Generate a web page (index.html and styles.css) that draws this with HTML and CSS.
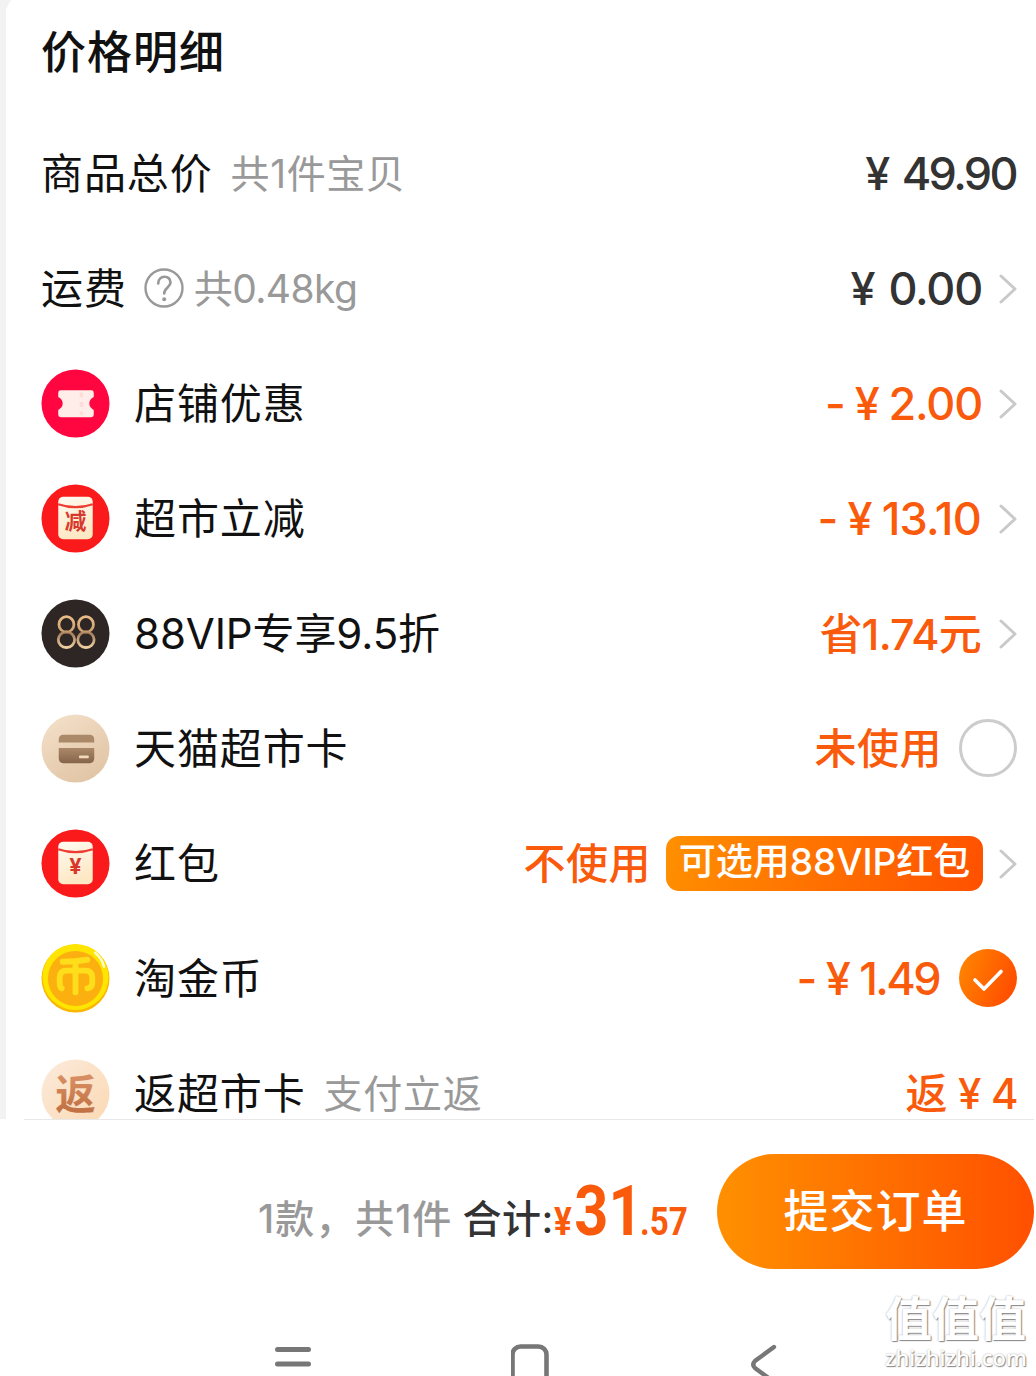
FILE: index.html
```html
<!DOCTYPE html>
<html lang="zh-CN">
<head>
<meta charset="utf-8">
<title>价格明细</title>
<link rel="stylesheet" href="styles.css">
</head>
<body>
<svg class="defs" width="0" height="0" aria-hidden="true">
  <defs>
    <linearGradient id="cream" x1="0" y1="0" x2="0.3" y2="1"><stop offset="0" stop-color="#fffaf2"/><stop offset="1" stop-color="#fde8c4"/></linearGradient>
    <linearGradient id="sand" x1="0.2" y1="0" x2="0.8" y2="1"><stop offset="0" stop-color="#f3dfc8"/><stop offset="1" stop-color="#e0c3a3"/></linearGradient>
    <linearGradient id="brown" x1="0" y1="0" x2="0" y2="1"><stop offset="0" stop-color="#aa8868"/><stop offset="1" stop-color="#86644a"/></linearGradient>
    <linearGradient id="peach" x1="0" y1="0" x2="1" y2="1"><stop offset="0" stop-color="#fbeadb"/><stop offset="1" stop-color="#fbd9b2"/></linearGradient>
    <linearGradient id="copper" x1="0" y1="0" x2="0" y2="1"><stop offset="0" stop-color="#dc9469"/><stop offset="1" stop-color="#bd6b3d"/></linearGradient>
    <linearGradient id="gold" gradientUnits="userSpaceOnUse" x1="0" y1="17" x2="0" y2="50"><stop offset="0" stop-color="#e9bd88"/><stop offset="0.45" stop-color="#d0a472"/><stop offset="0.55" stop-color="#a57f5c"/><stop offset="1" stop-color="#f3d3a3"/></linearGradient>
    <linearGradient id="orange" x1="0" y1="0" x2="1" y2="0.4"><stop offset="0" stop-color="#ff8a00"/><stop offset="1" stop-color="#ff5000"/></linearGradient>
    <symbol id="chevron" viewBox="0 0 18 30"><path d="M2 2 16 15 2 28" fill="none" stroke="#c9c9c9" stroke-width="3" stroke-linecap="round" stroke-linejoin="round"/></symbol>
    <symbol id="packet" viewBox="0 0 70 70">
      <circle cx="35" cy="35" r="34.5" fill="#fb1a1b"/>
      <rect x="17.5" y="13" width="35" height="43" rx="5" fill="url(#cream)"/>
      <path d="M17.5 20.500Q35 26.500 52.5 20.500" fill="none" stroke="#ee3c33" stroke-width="2.200"/>
    </symbol>
  </defs>
</svg>
<main class="sheet">
  <h1 class="title">价格明细</h1>
  <div class="row">
    <span class="label">商品总价</span><span class="note tight">共1件宝贝</span>
    <span class="value dark tight sum"><span class="yen wide">¥</span>49.90</span>
  </div>
  <div class="row">
    <span class="label">运费</span>
    <svg class="help" viewBox="0 0 40 40"><circle cx="20" cy="20" r="18.500" fill="none" stroke="#999" stroke-width="2.400"/><path d="M14.200 15.500C14.400 6.500 26.500 6.800 26.500 14.500C26.500 19.500 20.200 19.500 20.200 25.500" fill="none" stroke="#999" stroke-width="2.700" stroke-linecap="round"/><circle cx="20.200" cy="31.300" r="2" fill="#999"/></svg>
    <span class="note weight">共0.48kg</span>
    <span class="value dark"><span class="yen wide">¥</span>0.00</span><svg class="chevron"><use href="#chevron"/></svg>
  </div>
  <div class="row">
    <svg class="icon" viewBox="0 0 70 70"><circle cx="35" cy="35" r="34.500" fill="#ff0640"/><path d="M20 21.500H51Q53.500 21.500 53.500 24V28.500Q49 31 49 35Q49 39 53.500 41.500V46.500Q53.500 49 51 49H20Q17.500 49 17.500 46.500V41.500Q22 39 22 35Q22 31 17.500 28.500V24Q17.500 21.500 20 21.500Z" fill="#ffede9"/><path d="M41 24V47" stroke="#ffdcd7" stroke-width="3.500" stroke-dasharray="5 4.500"/></svg>
    <span class="label">店铺优惠</span>
    <span class="value"><span class="minus">-</span><span class="yen">¥</span>2.00</span><svg class="chevron"><use href="#chevron"/></svg>
  </div>
  <div class="row">
    <svg class="icon" viewBox="0 0 70 70"><use href="#packet"/><text x="35" y="46" class="glyph off">减</text></svg>
    <span class="label">超市立减</span>
    <span class="value ones"><span class="minus">-</span><span class="yen">¥</span>13.10</span><svg class="chevron"><use href="#chevron"/></svg>
  </div>
  <div class="row">
    <svg class="icon" viewBox="0 0 70 70"><circle cx="35" cy="35" r="34.500" fill="#2d2624"/><g fill="none" stroke="url(#gold)" stroke-width="2.800"><ellipse cx="25.800" cy="25.800" rx="7.600" ry="7.800"/><ellipse cx="25.800" cy="41.300" rx="8.300" ry="7.900"/><ellipse cx="45.600" cy="25.800" rx="7.600" ry="7.800"/><ellipse cx="45.600" cy="41.300" rx="8.300" ry="7.900"/></g></svg>
    <span class="label mixed">88VIP专享9.5折</span>
    <span class="value saved">省1.74元</span><svg class="chevron"><use href="#chevron"/></svg>
  </div>
  <div class="row">
    <svg class="icon" viewBox="0 0 70 70"><circle cx="35" cy="35" r="34.500" fill="url(#sand)"/><path d="M18 29V26Q18 21 23 21H49Q54 21 54 26V29Z" fill="#aa8969"/><path d="M18 34.500H54V45Q54 50 49 50H23Q18 50 18 45Z" fill="url(#brown)"/><rect x="38.500" y="42" width="10" height="3" rx="1" fill="#f2d9bd"/></svg>
    <span class="label">天猫超市卡</span>
    <span class="value cjk">未使用</span><span class="radio"></span>
  </div>
  <div class="row">
    <svg class="icon" viewBox="0 0 70 70"><use href="#packet"/><text x="35" y="46" class="glyph coin">¥</text></svg>
    <span class="label">红包</span>
    <span class="value cjk">不使用</span><span class="badge">可选用88VIP红包</span><svg class="chevron"><use href="#chevron"/></svg>
  </div>
  <div class="row">
    <svg class="icon" viewBox="0 0 70 70"><circle cx="35" cy="35" r="34.500" fill="#f9b700"/><circle cx="35" cy="33.500" r="33.500" fill="#fee500"/><circle cx="35" cy="35" r="28" fill="#fcb010"/><path d="M22 18Q35 18 47 16M21 45Q19 44 19 39V34Q19 27 26 27H45Q52 27 52 34V39Q52 44 47 45M35 18V49" fill="none" stroke="#fedd1a" stroke-width="6" stroke-linecap="round" stroke-linejoin="round"/><path d="M55 9Q62 15 64 23" fill="none" stroke="#fffbd0" stroke-width="2.500" stroke-linecap="round"/></svg>
    <span class="label">淘金币</span>
    <span class="value tight"><span class="minus">-</span><span class="yen">¥</span>1.49</span>
    <svg class="checked" viewBox="0 0 58 58"><circle cx="29" cy="29" r="29" fill="url(#orange)"/><path d="M16 31 25 40 42 22.500" fill="none" stroke="#fff" stroke-width="3.600" stroke-linecap="round" stroke-linejoin="round"/></svg>
  </div>
  <div class="row">
    <svg class="icon" viewBox="0 0 70 70"><circle cx="35" cy="35" r="34.500" fill="url(#peach)"/><text x="35" y="50.500" class="glyph back">返</text></svg>
    <span class="label">返超市卡</span><span class="note">支付立返</span>
    <span class="value cjk end">返<span class="yen">¥</span>4</span>
  </div>
</main>
<footer class="footer">
  <div class="checkout">
    <span class="count">1款，共1件</span>
    <span class="total">合计:</span>
    <span class="price"><span class="unit">¥</span><span class="whole">31</span><span class="cents">.57</span></span>
    <button class="submit" type="button">提交订单</button>
  </div>
  <nav class="system">
    <svg width="38" height="40" viewBox="0 0 38 40"><path d="M3.500 13.500H34.500M3.500 28H34.500" stroke="#777" stroke-width="5" stroke-linecap="round"/></svg>
    <svg width="40" height="40" viewBox="0 0 40 40"><rect x="1.500" y="10.500" width="34" height="38" rx="8" fill="none" stroke="#777" stroke-width="4.600"/></svg>
    <svg width="28" height="40" viewBox="0 0 28 40"><path d="M25 11 6 25Q2.500 28.500 6 32L25 46" fill="none" stroke="#777" stroke-width="4.400" stroke-linecap="round"/></svg>
  </nav>
</footer>
<div class="watermark"><span class="mark">值值值</span><span class="site">zhizhizhi.com</span></div>
</body>
</html>
```

FILE: styles.css
```css
* { box-sizing: border-box; }
body {
  margin: 0;
  width: 1036px;
  height: 1376px;
  overflow: hidden;
  position: relative;
  background: #fff;
  font-family: Inter, "Noto Sans CJK SC", sans-serif;
  color: #111;
}
.defs { position: absolute; }
.sheet {
  height: 1119px;
  overflow: hidden;
  border-left: 6px solid #f2f2f2;
  background: radial-gradient(circle at 24px 16px, #fff 24px, #f2f2f2 25px) 0 0 / 12px 8px no-repeat;
  padding: 0 19px 0 35px;
}
.title {
  margin: 0;
  height: 116px;
  padding-top: 19px;
  font-size: 45px;
  line-height: 68px;
  letter-spacing: 1px;
  font-weight: 500;
}
.row { display: flex; align-items: center; height: 115px; white-space: nowrap; }
.label { font-size: 42px; line-height: 60px; letter-spacing: 0.9px; }
.label.mixed { letter-spacing: -0.1px; }
.note { margin-left: 18px; font-size: 39px; line-height: 60px; letter-spacing: 0.7px; color: #999; }
.note.tight { letter-spacing: 0.6px; }
.note.weight { margin-left: 10px; letter-spacing: -0.6px; }
.help { width: 40px; height: 40px; margin: 0 0 1px 17px; }
.icon { width: 69px; height: 69px; margin-right: 24px; flex: none; }
.value { margin-left: auto; font-size: 45px; line-height: 64px; font-weight: 500; color: #fa5a0c; letter-spacing: -1.2px; margin-right: 1px; }
.value.dark { color: #333; }
.value.tight { letter-spacing: -2.6px; margin-right: 4px; }
.value.sum { margin-right: 1px; }
.value.ones { letter-spacing: -0.8px; margin-right: 2px; }
.value.saved { font-size: 43px; letter-spacing: -0.8px; margin-right: 2px; }
.value.cjk { font-size: 42px; letter-spacing: 0.5px; margin-right: 0; }
.value.end { margin-right: -2px; }
.minus { margin-right: 10px; }
.yen { margin-right: 10px; }
.tight .minus { margin-right: 11px; }
.tight .yen { margin-right: 11px; }
.yen.wide { margin-right: 14px; }
.tight .yen.wide { margin-right: 14px; }
.end .yen { margin: 0 9px 0 10px; }
.chevron { width: 18px; height: 30px; margin-left: 16px; flex: none; }
.radio { width: 58px; height: 58px; margin: 0 0 1px 17px; border: 3px solid #ccc; border-radius: 50%; }
.checked { width: 58px; height: 58px; margin: 0 0 1px 16px; }
.badge {
  width: 317px;
  height: 55px;
  margin-left: 15px;
  border-radius: 13px;
  background: linear-gradient(105deg, #ff9000, #ff5000);
  color: #fff;
  font-size: 37px;
  line-height: 51px;
  font-weight: 500;
  text-align: center;
}
.glyph { text-anchor: middle; font-weight: 700; }
.glyph.off { font-size: 22px; fill: #d8382c; }
.glyph.coin { font-size: 22px; fill: #d8382c; }
.glyph.back { font-size: 41px; fill: url(#copper); }
.footer { height: 257px; }
.checkout {
  display: flex;
  align-items: center;
  height: 184px;
  margin: 0 2px 0 24px;
  border-top: 1px solid #e8e8e8;
  padding-left: 234px;
  white-space: nowrap;
}
.count, .total { font-size: 39px; line-height: 60px; margin-top: 14px; font-weight: 500; }
.count { color: #999; letter-spacing: 1px; }
.total { margin-left: 10px; color: #333; letter-spacing: 0.5px; }
.price {
  display: flex;
  align-items: baseline;
  margin-top: 9px;
  color: #fa5a0c;
  font-family: Roboto, sans-serif;
  font-weight: 700;
  line-height: 80px;
  transform: scaleX(0.85);
  transform-origin: left;
}
.unit, .cents { font-size: 39px; }
.unit { margin-right: 3px; }
.whole { font-size: 70px; margin-right: -3px; }
.submit {
  width: 317px;
  height: 115px;
  flex: none;
  margin-left: auto;
  border: 0;
  border-radius: 58px;
  background: linear-gradient(90deg, #ff9000, #ff5000);
  color: #fff;
  font: 500 45px/115px Inter, "Noto Sans CJK SC", sans-serif;
  letter-spacing: 1px;
  padding: 0;
}
.system { display: flex; justify-content: space-between; padding: 33px 259px 0 274px; }
.watermark {
  position: absolute;
  left: 885px;
  top: 1293px;
  width: 145px;
  display: flex;
  flex-direction: column;
  color: #fff;
  text-shadow: 1px 1px 1px #888, 0 0 2px #aaa;
}
.mark { font-size: 47px; line-height: 51px; font-weight: 700; }
.site { font: 500 22px/26px "Noto Sans", sans-serif; }
```
